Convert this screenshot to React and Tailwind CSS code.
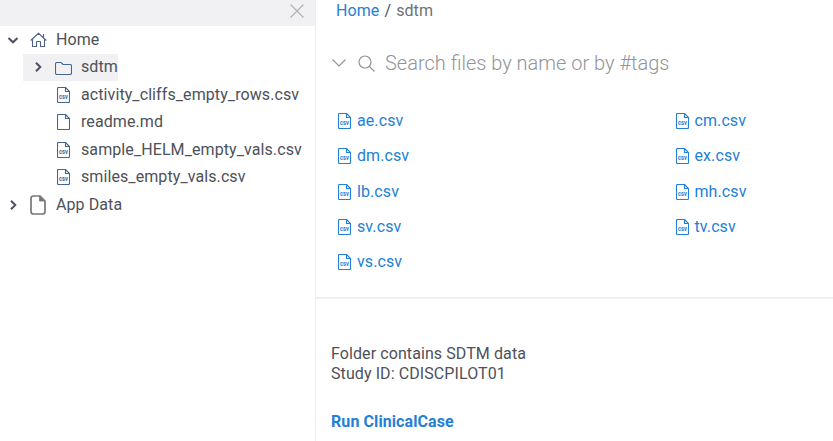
import React from 'react';

function FileIcon({ csv, className = '' }) {
  return (
    <svg viewBox="0 0 13 16" className={`h-4 w-[13px] shrink-0 ${className}`} fill="none" stroke="currentColor" strokeWidth="1.1">
      <path d="M8.5 .5L12.5 4.5V14.5Q12.5 15.5 11.5 15.5H1.5Q.5 15.5 .5 14.5V1.5Q.5 .5 1.5 .5H8.5V4.5H12.5" />
      {csv && (
        <text x="6.5" y="12.2" textAnchor="middle" fontSize="7.5" fontWeight="700" fontFamily="Roboto, sans-serif" fill="currentColor" stroke="none" textLength="9" lengthAdjust="spacingAndGlyphs">csv</text>
      )}
    </svg>
  );
}

function Chevron({ open }) {
  return (
    <svg viewBox="0 0 12 12" className="h-3 w-3 shrink-0 text-[#4d5261]" fill="none" stroke="currentColor" strokeWidth="2">
      <path d={open ? 'M1.5 4L6 8.3L10.5 4' : 'M4 1.7L8.3 6L4 10.3'} />
    </svg>
  );
}

function HomeIcon() {
  return (
    <svg viewBox="0 0 18 16" className="h-4 w-[18px] shrink-0 text-[#4f6080]" fill="none" stroke="currentColor" strokeWidth="1.1">
      <path d="M.7 8.5L8.5 1.3L16.3 8.5M2.5 7V14.5H6.5V10Q6.5 9.5 7 9.5H10Q10.5 9.5 10.5 10V14.5H14.5V7M13.5 6V2" />
    </svg>
  );
}

const treeFiles = [
  ['activity_cliffs_empty_rows.csv', true],
  ['readme.md', false],
  ['sample_HELM_empty_vals.csv', true],
  ['smiles_empty_vals.csv', true],
];

const columns = [
  ['ae.csv', 'dm.csv', 'lb.csv', 'sv.csv', 'vs.csv'],
  ['cm.csv', 'ex.csv', 'mh.csv', 'tv.csv'],
];

export default function App() {
  return (
    <div className="flex h-[441px] w-[833px] overflow-hidden bg-white font-['Roboto',sans-serif] text-base tracking-[0.09px] text-[#4d5159]">
      <aside className="flex w-[316px] shrink-0 flex-col border-r border-[#ededf0]">
        <div className="flex h-[26px] shrink-0 justify-end bg-[#f1f1f4] pr-[11px] pt-1">
          <svg viewBox="0 0 14 14" className="h-[14px] w-[14px] text-[#b0b2b6]" fill="none" stroke="currentColor" strokeWidth="1.2">
            <path d="M.5 .5L13.5 13.5M13.5 .5L.5 13.5" />
          </svg>
        </div>
        <div className="flex h-7 items-center pl-[7px]">
          <Chevron open />
          <span className="ml-[11px] flex"><HomeIcon /></span>
          <span className="ml-2">Home</span>
        </div>
        <div className="ml-[23px] flex h-[27px] w-[95px] items-center bg-[#f1f1f4] pb-px pl-[9px]">
          <Chevron />
          <svg viewBox="0 0 17 13" className="ml-[11px] mt-[2px] h-[13px] w-[17px] shrink-0 text-[#45668c]" fill="none" stroke="currentColor" strokeWidth="1.1">
            <path d="M.5 2Q.5 .5 2 .5H6L8 2.5H15Q16.5 2.5 16.5 4V11Q16.5 12.5 15 12.5H2Q.5 12.5 .5 11Z" />
          </svg>
          <span className="ml-[9px]">sdtm</span>
        </div>
        {treeFiles.map(([name, csv]) => (
          <div key={name} className="flex h-[27.5px] items-center pl-[57px]">
            <FileIcon csv={csv} className="text-[#45668c]" />
            <span className="ml-[11px] whitespace-nowrap">{name}</span>
          </div>
        ))}
        <div className="flex h-[27.5px] items-center pl-[7px]">
          <Chevron />
          <svg viewBox="0 0 16 20" className="ml-[11px] h-5 w-4 shrink-0 text-[#777]" fill="none" stroke="currentColor" strokeWidth="1.7">
            <path d="M3.5 1H10L15 6V16.5Q15 19 12.5 19H3.5Q1 19 1 16.5V3.5Q1 1 3.5 1Z" />
            <path d="M9.5 1V6H15Z" fill="currentColor" strokeWidth=".8" />
          </svg>
          <span className="ml-[10px]">App Data</span>
        </div>
      </aside>
      <main className="flex min-w-0 flex-1 flex-col">
        <nav className="flex h-[21px] items-center gap-[5px] pl-5">
          <a className="text-[#2480d6]">Home</a>
          <span>/</span>
          <span className="text-[#6c7178]">sdtm</span>
        </nav>
        <div className="mt-[28px] flex h-7 items-center pl-4 text-[#929497]">
          <svg viewBox="0 0 14 8" className="h-2 w-[14px]" fill="none" stroke="currentColor" strokeWidth="1.2">
            <path d="M.5 .5L7 7L13.5 .5" />
          </svg>
          <svg viewBox="0 0 17 17" className="ml-[12px] h-[17px] w-[17px]" fill="none" stroke="currentColor" strokeWidth="1.2">
            <circle cx="7" cy="7" r="6" />
            <path d="M11.3 11.3L16.5 16.5" />
          </svg>
          <span className="ml-[10px] whitespace-nowrap text-xl font-light tracking-normal">Search files by name or by #tags</span>
        </div>
        <div className="mt-[26.5px] flex h-[195.5px] shrink-0 border-b-2 border-[#f0f0f1] pl-[22px] text-[#2480d6]">
          {columns.map((files, i) => (
            <div key={i} className="w-[337.5px] shrink-0">
              {files.map((name) => (
                <div key={name} className="flex h-[35.25px] items-center">
                  <FileIcon csv />
                  <span className="ml-[6px]">{name}</span>
                </div>
              ))}
            </div>
          ))}
        </div>
        <div className="mt-[45px] pl-[15px] leading-5">
          <p>Folder contains SDTM data</p>
          <p>Study ID: CDISCPILOT01</p>
          <a className="mt-7 block font-bold text-[#2480d6]">Run ClinicalCase</a>
        </div>
      </main>
    </div>
  );
}
